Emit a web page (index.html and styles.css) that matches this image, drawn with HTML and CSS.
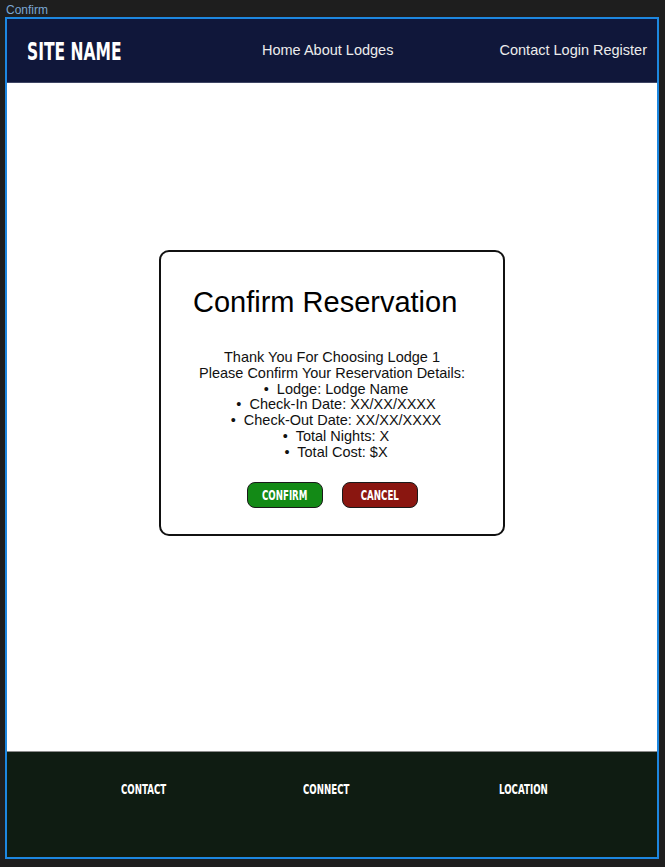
FILE: index.html
```html
<!DOCTYPE html>
<html lang="en">
<head>
<meta charset="utf-8">
<title>Confirm</title>
<link rel="stylesheet" href="styles.css">
</head>
<body>
<div class="label">Confirm</div>
<div class="frame">
  <header class="header">
    <div class="brand"><span class="cond">SITE NAME</span></div>
    <nav class="nav-main">Home About Lodges</nav>
    <nav class="nav-user">Contact Login Register</nav>
  </header>
  <main class="main">
    <section class="modal">
      <h1 class="modal-title">Confirm Reservation</h1>
      <div class="modal-body">
        <p>Thank You For Choosing Lodge 1</p>
        <p>Please Confirm Your Reservation Details:</p>
        <p class="item">&bull;&nbsp; Lodge: Lodge Name</p>
        <p class="item">&bull;&nbsp; Check-In Date: XX/XX/XXXX</p>
        <p class="item">&bull;&nbsp; Check-Out Date: XX/XX/XXXX</p>
        <p class="item">&bull;&nbsp; Total Nights: X</p>
        <p class="item">&bull;&nbsp; Total Cost: $X</p>
      </div>
      <div class="actions">
        <button class="btn btn-confirm"><span class="cond">CONFIRM</span></button>
        <button class="btn btn-cancel"><span class="cond">CANCEL</span></button>
      </div>
    </section>
  </main>
  <footer class="footer">
    <div class="foot-col"><span class="cond">CONTACT</span></div>
    <div class="foot-col"><span class="cond">CONNECT</span></div>
    <div class="foot-col"><span class="cond">LOCATION</span></div>
  </footer>
</div>
</body>
</html>
```
FILE: styles.css
```css
html, body {
  margin: 0;
  padding: 0;
  background: #1e1e1e;
  font-family: "Liberation Sans", Arial, sans-serif;
}
.label {
  height: 17px;
  padding-left: 6px;
  font-size: 12px;
  line-height: 21px;
  color: #7aa6d2;
}
.frame {
  margin-left: 5px;
  width: 650px;
  height: 838px;
  border: 2px solid #1d87e0;
  display: flex;
  flex-direction: column;
  background: #ffffff;
}
.cond {
  display: inline-block;
  font-family: "DejaVu Sans", sans-serif;
  font-weight: bold;
  transform: scaleX(0.62);
  transform-origin: left center;
}
.header {
  height: 63px;
  flex: none;
  background: #10173a;
  border-bottom: 1px solid #3e4564;
  display: grid;
  grid-template-columns: 235px 1fr auto;
  align-items: center;
  padding: 0 10px 0 20px;
  color: #ececec;
}
.brand {
  font-size: 25px;
  color: #ffffff;
  padding-top: 2px;
  white-space: nowrap;
}
.nav-main, .nav-user {
  font-size: 14.5px;
  padding-bottom: 2px;
}
.main {
  flex: 1;
  display: flex;
  justify-content: center;
  align-items: flex-start;
  padding-top: 167px;
}
.modal {
  width: 342px;
  height: 282px;
  border: 2px solid #111111;
  border-radius: 10px;
}
.modal-title {
  margin: 32px 0 0 32px;
  font-size: 29px;
  font-weight: normal;
  line-height: 36px;
  color: #000;
}
.modal-body {
  margin-top: 30px;
  text-align: center;
  font-size: 14.5px;
  line-height: 15.8px;
  color: #111;
}
.modal-body p {
  margin: 0;
}
.modal-body .item {
  padding-left: 8px;
}
.actions {
  display: flex;
  justify-content: center;
  gap: 19px;
  margin-top: 21px;
}
.btn {
  width: 76px;
  height: 26px;
  border-radius: 8px;
  border: 1px solid #1a1a1a;
  color: #ffffff;
  font-size: 14px;
  padding: 0;
  white-space: nowrap;
  display: flex;
  align-items: center;
  justify-content: center;
}
.btn .cond {
  transform-origin: center center;
  margin: 0 -16px;
}
.btn-confirm {
  background: #138a16;
}
.btn-cancel {
  background: #8a1610;
}
.footer {
  height: 106px;
  flex: none;
  background: #0f1c12;
  border-top: 1px solid #8c8c8c;
  display: grid;
  grid-template-columns: 182px 196px auto;
  padding-left: 114px;
  padding-top: 29px;
  box-sizing: border-box;
  color: #ffffff;
  font-size: 14px;
  white-space: nowrap;
}
```
